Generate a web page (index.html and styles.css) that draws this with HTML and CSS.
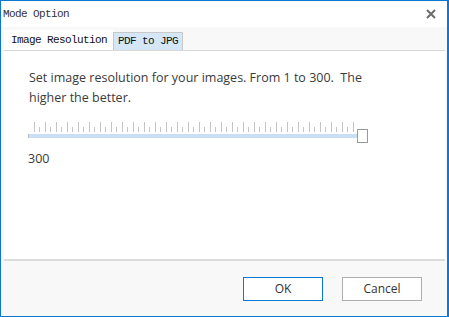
FILE: index.html
```html
<!DOCTYPE html>
<html lang="en">
<head>
    <meta charset="UTF-8">
    <title>Mode Option</title>
    <link rel="stylesheet" href="styles.css">
</head>
<body>
    <div class="dialog">
        <div class="titlebar">
            <div class="title">Mode Option</div>
            <div class="close">
                <svg width="10" height="10" viewBox="0 0 10 10">
                    <path d="M1 1 L9 9 M9 1 L1 9" stroke="#6b6b6b" stroke-width="2"/>
                </svg>
            </div>
        </div>
        <div class="tabs">
            <div class="tab active">Image Resolution</div>
            <div class="tab">PDF to JPG</div>
        </div>
        <div class="panel">
            <p class="desc">Set image resolution for your images. From 1 to 300.&nbsp; The higher the better.</p>
            <div class="slider">
                <div class="ticks"></div>
                <div class="track"></div>
                <div class="thumb"></div>
            </div>
            <div class="value">300</div>
        </div>
        <div class="footer">
            <div class="btn ok">OK</div>
            <div class="btn">Cancel</div>
        </div>
    </div>
</body>
</html>
```

FILE: styles.css
```css
* {
    margin: 0;
    padding: 0;
    box-sizing: border-box;
}
body {
    background-color: #fff;
}
.dialog {
    width: 449px;
    height: 317px;
    border: 1px solid #0b78d4;
    border-right-width: 2px;
    display: flex;
    flex-direction: column;
    background-color: #f8f8f8;
}
.titlebar {
    height: 26px;
    background-color: #fff;
    display: flex;
    align-items: center;
    justify-content: space-between;
    padding: 0 11px 0 2px;
}
.title {
    font-family: "Liberation Mono", monospace;
    font-size: 11px;
    letter-spacing: -0.6px;
    color: #333;
}
.close {
    width: 10px;
    height: 10px;
    display: flex;
}
.tabs {
    height: 23px;
    display: flex;
    align-items: flex-end;
    padding-left: 3px;
}
.tab {
    font-family: "Liberation Mono", monospace;
    font-size: 11px;
    letter-spacing: -0.6px;
    color: #111;
    height: 18px;
    line-height: 17px;
    padding: 0 4px;
    background-color: #d5e6f6;
    border: 1px solid #c9c9c9;
    border-bottom: none;
}
.tab.active {
    width: 109px;
    height: 20px;
    line-height: 20px;
    padding-left: 7px;
    background-color: #fff;
    border: none;
}
.panel {
    flex: 1;
    margin: 0 2px 0 3px;
    background-color: #fff;
    border-top: 1px solid #d8d8d8;
    border-bottom: 2px solid #dcdcdc;
    padding: 17px 24px 0 24px;
}
.desc {
    font-family: "Open Sans", sans-serif;
    font-size: 12.5px;
    line-height: 20px;
    color: #3a3a3a;
    padding-left: 1px;
    width: 345px;
}
.slider {
    position: relative;
    width: 340px;
    height: 22px;
    margin-top: 14px;
}
.ticks {
    margin-left: 6px;
    width: 323px;
    height: 10px;
    background-image:
        repeating-linear-gradient(to right, #c4c4c4 0, #c4c4c4 1px, transparent 1px, transparent 11px),
        repeating-linear-gradient(to right, transparent 0, transparent 5px, #c4c4c4 5px, #c4c4c4 6px, transparent 6px, transparent 11px);
    background-size: 100% 10px, 100% 5px;
    background-position: 0 0, 0 5px;
    background-repeat: no-repeat;
}
.track {
    margin-top: 2px;
    width: 335px;
    height: 4px;
    background-color: #cbdff4;
    border-left: 1px solid #bbb;
}
.thumb {
    position: absolute;
    left: 329px;
    top: 7px;
    width: 11px;
    height: 14px;
    background-color: #fff;
    border: 1px solid #9a9a9a;
}
.value {
    font-family: "Open Sans", sans-serif;
    font-size: 12.5px;
    color: #3a3a3a;
    margin-top: 6px;
}
.footer {
    height: 55px;
    display: flex;
    justify-content: flex-end;
    gap: 19px;
    padding: 16px 25px 0 0;
}
.btn {
    width: 80px;
    height: 24px;
    border: 1px solid #adadad;
    background-color: #fff;
    font-family: "Open Sans", sans-serif;
    font-size: 12px;
    color: #333;
    text-align: center;
    line-height: 22px;
}
.btn.ok {
    border-color: #0b78d4;
}
```
